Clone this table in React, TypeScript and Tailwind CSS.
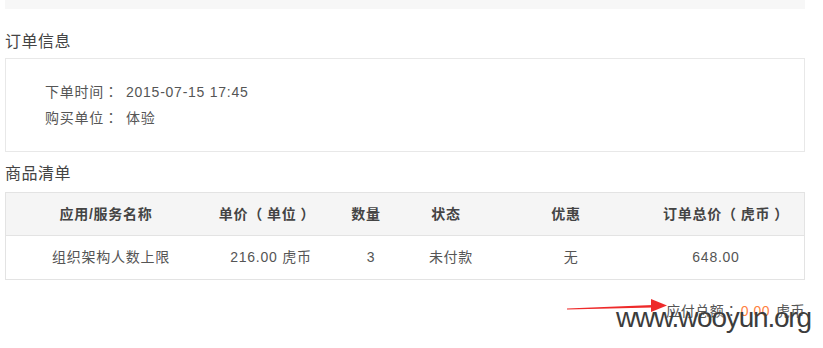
import React from "react";

const font = { fontFamily: '"Liberation Sans", Arial, "Noto Sans CJK SC", sans-serif' };

function P({ c }: { c: string }) {
  return <span style={{ fontFamily: '"Noto Sans CJK TC", sans-serif' }}>{c}</span>;
}

function Open() {
  return <span className="mr-[4px]" style={{ fontFamily: '"Noto Sans CJK TC", sans-serif' }}>（</span>;
}
function Close() {
  return <span className="ml-[4px]" style={{ fontFamily: '"Noto Sans CJK TC", sans-serif' }}>）</span>;
}

const cols = [
  { h: <>应用/服务名称</>, b: "组织架构人数上限", w: "w-[200px]", hp: "", bp: "pl-[10px]" },
  { h: <>单价<Open />单位<Close /></>, b: "216.00 虎币", w: "w-[116px]", hp: "pl-[6px]", bp: "pl-[14px]" },
  { h: <>数量</>, b: "3", w: "w-[88px]", hp: "", bp: "pl-[10px]" },
  { h: <>状态</>, b: "未付款", w: "w-[72px]", hp: "", bp: "pl-[10px]" },
  { h: <>优惠</>, b: "无", w: "w-[168px]", hp: "", bp: "pl-[10px]" },
  { h: <>订单总价<Open />虎币<Close /></>, b: "648.00", w: "w-[146px]", hp: "pl-[6px]", bp: "pr-[14px]" },
];

export default function App() {
  return (
    <div className="w-[823px] h-[348px] bg-white overflow-hidden relative text-[#555]" style={font}>
      <div className="w-[800px] ml-[5px]">
        <div className="h-[9px] bg-[#f7f7f7]" />
        <div className="mt-[21px] h-[24px] leading-[24px] text-[16px] tracking-[0.5px] text-[#444]">订单信息</div>
        <div className="mt-[4px] border border-[#e8e8e8] py-[20px] pl-[39px] text-[14px] tracking-[0.75px]">
          <div className="flex h-[26px] items-center">
            <span className="w-[81px]">下单时间<P c="：" /></span>
            <span>2015-07-15 17:45</span>
          </div>
          <div className="flex h-[26px] items-center">
            <span className="w-[81px]">购买单位<P c="：" /></span>
            <span>体验</span>
          </div>
        </div>
        <div className="mt-[10px] h-[24px] leading-[24px] text-[16px] tracking-[0.5px] text-[#444]">商品清单</div>
        <div className="mt-[6px] border border-[#e3e3e3] text-[14px] tracking-[0.75px]">
          <div className="flex h-[43px] items-center bg-[#f5f5f5] border-b border-[#e3e3e3] font-bold text-[#444]">
            {cols.map((c, i) => (
              <div key={i} className={`${c.w} ${c.hp} text-center shrink-0`}>{c.h}</div>
            ))}
          </div>
          <div className="flex h-[43px] items-center">
            {cols.map((c, i) => (
              <div key={i} className={`${c.w} ${c.bp} text-center shrink-0`}>{c.b}</div>
            ))}
          </div>
        </div>
        <div className="mt-[18px] h-[24px] leading-[24px] text-right text-[14px] tracking-[0.5px]">
          <span>应付总额<P c="：" /></span>
          <span className="ml-[2px] text-[#ff7f3f]">0.00</span>
          <span className="ml-[6px]">虎币</span>
        </div>
      </div>
      <svg className="absolute left-[560px] top-[296px]" width="112" height="20" viewBox="0 0 112 20">
        <polygon points="7,12.5 93,9 93,11.5 7,13.5" fill="#ee2a2a" />
        <polygon points="91,3 107,9.5 91,16" fill="#ee2a2a" />
      </svg>
      <div
        className="absolute left-[616px] top-[300px] text-[28px] leading-[36px] tracking-[-1.2px] text-[#3c3c3c]"
        style={{ fontFamily: '"Liberation Sans", Arial, sans-serif' }}
      >
        www.wooyun.org
      </div>
    </div>
  );
}
